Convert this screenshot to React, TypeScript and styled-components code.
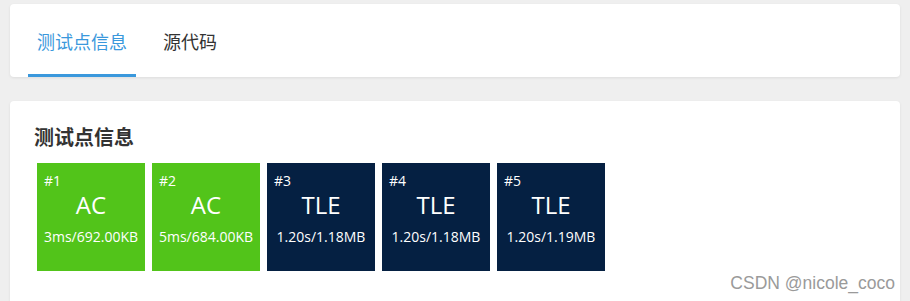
import styled, { createGlobalStyle } from "styled-components";

const GlobalStyle = createGlobalStyle`
  html, body {
    margin: 0;
    padding: 0;
    background: #efefef;
    font-family: "Open Sans", "Noto Sans CJK SC", sans-serif;
    overflow: hidden;
  }
`;

const Page = styled.div`
  position: relative;
  height: 301px;
  padding: 4px 10px 0;
  box-sizing: border-box;
  display: flex;
  flex-direction: column;
  gap: 24px;
`;

const Card = styled.div`
  background: #fff;
  border-radius: 4px;
  box-shadow: 0 1px 3px rgba(0, 0, 0, 0.08);
`;

const TabBar = styled(Card)`
  height: 73px;
  display: flex;
  align-items: stretch;
  padding-left: 18px;
  gap: 18px;
`;

const Tab = styled.div<{ $active?: boolean }>`
  display: flex;
  align-items: center;
  padding: 3px 9px 0;
  font-family: "Noto Sans CJK SC", sans-serif;
  font-size: 18px;
  color: ${(p) => (p.$active ? "#3a98dc" : "#333")};
  border-bottom: 3px solid ${(p) => (p.$active ? "#3a98dc" : "transparent")};
`;

const Panel = styled(Card)`
  flex: 1;
  padding: 24px 24px 0 27px;
  border-radius: 4px 4px 0 0;
`;

const Heading = styled.div`
  font-family: "Noto Sans CJK SC", sans-serif;
  font-weight: 700;
  font-size: 20px;
  color: #333;
  margin-left: -3px;
  line-height: 24px;
  margin-bottom: 14px;
`;

const Cases = styled.div`
  display: flex;
  gap: 7px;
`;

const Case = styled.div<{ $ok: boolean }>`
  width: 108px;
  height: 108px;
  background: ${(p) => (p.$ok ? "#52c41a" : "#052042")};
  color: #fff;
  display: flex;
  flex-direction: column;
  padding: 9px 0 0;
  box-sizing: border-box;
`;

const CaseNo = styled.div`
  font-size: 14px;
  line-height: 18px;
  padding-left: 7px;
`;

const Verdict = styled.div`
  text-align: center;
  font-size: 24px;
  line-height: 30px;
`;

const Stat = styled.div`
  text-align: center;
  font-size: 14px;
  line-height: 20px;
  margin-top: 7px;
`;

const Mark = styled.div`
  position: absolute;
  right: 15px;
  bottom: 7px;
  font-family: "Liberation Sans", Arial, sans-serif;
  font-size: 17.5px;
  color: #9a9a9a;
`;

const cases = [
  { ok: true, v: "AC", s: "3ms/692.00KB" },
  { ok: true, v: "AC", s: "5ms/684.00KB" },
  { ok: false, v: "TLE", s: "1.20s/1.18MB" },
  { ok: false, v: "TLE", s: "1.20s/1.18MB" },
  { ok: false, v: "TLE", s: "1.20s/1.19MB" },
];

export default function App() {
  return (
    <Page>
      <GlobalStyle />
      <TabBar>
        <Tab $active>测试点信息</Tab>
        <Tab>源代码</Tab>
      </TabBar>
      <Panel>
        <Heading>测试点信息</Heading>
        <Cases>
          {cases.map((c, i) => (
            <Case key={i} $ok={c.ok}>
              <CaseNo>#{i + 1}</CaseNo>
              <Verdict>{c.v}</Verdict>
              <Stat>{c.s}</Stat>
            </Case>
          ))}
        </Cases>
      </Panel>
      <Mark>CSDN @nicole_coco</Mark>
    </Page>
  );
}
